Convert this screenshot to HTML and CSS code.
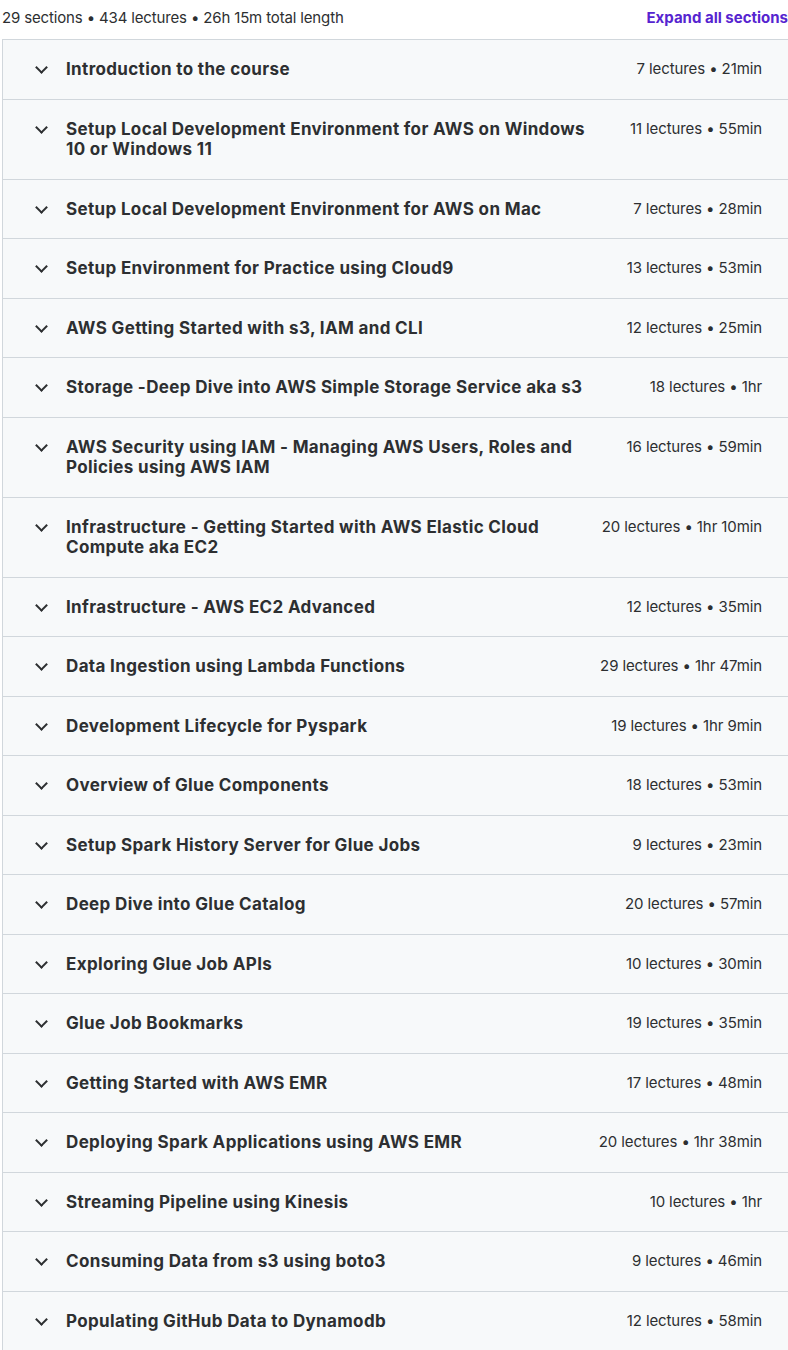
FILE: index.html
```html
<!DOCTYPE html>
<html lang="en">
<head>
    <meta charset="UTF-8">
    <meta name="viewport" content="width=device-width, initial-scale=1.0">
    <title>Course content</title>
    <link rel="stylesheet" href="styles.css">
</head>
<body>
    <div class="curriculum">
        <div class="summary">
            <span class="totals">29 sections • 434 lectures • 26h 15m total length</span>
            <a href="#" class="expand">Expand all sections</a>
        </div>
        <ul class="sections">
            <li class="section"><span class="chev"></span><span class="title">Introduction to the course</span><span class="meta">7 lectures • 21min</span></li>
            <li class="section"><span class="chev"></span><span class="title">Setup Local Development Environment for AWS on Windows 10 or Windows 11</span><span class="meta">11 lectures • 55min</span></li>
            <li class="section"><span class="chev"></span><span class="title">Setup Local Development Environment for AWS on Mac</span><span class="meta">7 lectures • 28min</span></li>
            <li class="section"><span class="chev"></span><span class="title">Setup Environment for Practice using Cloud9</span><span class="meta">13 lectures • 53min</span></li>
            <li class="section"><span class="chev"></span><span class="title">AWS Getting Started with s3, IAM and CLI</span><span class="meta">12 lectures • 25min</span></li>
            <li class="section"><span class="chev"></span><span class="title">Storage -Deep Dive into AWS Simple Storage Service aka s3</span><span class="meta">18 lectures • 1hr</span></li>
            <li class="section"><span class="chev"></span><span class="title">AWS Security using IAM - Managing AWS Users, Roles and Policies using AWS IAM</span><span class="meta">16 lectures • 59min</span></li>
            <li class="section"><span class="chev"></span><span class="title">Infrastructure - Getting Started with AWS Elastic Cloud Compute aka EC2</span><span class="meta">20 lectures • 1hr 10min</span></li>
            <li class="section"><span class="chev"></span><span class="title">Infrastructure - AWS EC2 Advanced</span><span class="meta">12 lectures • 35min</span></li>
            <li class="section"><span class="chev"></span><span class="title">Data Ingestion using Lambda Functions</span><span class="meta">29 lectures • 1hr 47min</span></li>
            <li class="section"><span class="chev"></span><span class="title">Development Lifecycle for Pyspark</span><span class="meta">19 lectures • 1hr 9min</span></li>
            <li class="section"><span class="chev"></span><span class="title">Overview of Glue Components</span><span class="meta">18 lectures • 53min</span></li>
            <li class="section"><span class="chev"></span><span class="title">Setup Spark History Server for Glue Jobs</span><span class="meta">9 lectures • 23min</span></li>
            <li class="section"><span class="chev"></span><span class="title">Deep Dive into Glue Catalog</span><span class="meta">20 lectures • 57min</span></li>
            <li class="section"><span class="chev"></span><span class="title">Exploring Glue Job APIs</span><span class="meta">10 lectures • 30min</span></li>
            <li class="section"><span class="chev"></span><span class="title">Glue Job Bookmarks</span><span class="meta">19 lectures • 35min</span></li>
            <li class="section"><span class="chev"></span><span class="title">Getting Started with AWS EMR</span><span class="meta">17 lectures • 48min</span></li>
            <li class="section"><span class="chev"></span><span class="title">Deploying Spark Applications using AWS EMR</span><span class="meta">20 lectures • 1hr 38min</span></li>
            <li class="section"><span class="chev"></span><span class="title">Streaming Pipeline using Kinesis</span><span class="meta">10 lectures • 1hr</span></li>
            <li class="section"><span class="chev"></span><span class="title">Consuming Data from s3 using boto3</span><span class="meta">9 lectures • 46min</span></li>
            <li class="section"><span class="chev"></span><span class="title">Populating GitHub Data to Dynamodb</span><span class="meta">12 lectures • 58min</span></li>
        </ul>
    </div>
</body>
</html>
```
FILE: styles.css
```css
html, body {
    margin:0; padding:0;
    overflow:hidden;
    background:#fff;
}
body {
    font-family:Inter, "Liberation Sans", Arial, sans-serif;
    color:#2d2f31;
}
.curriculum {
    width:786px;
    margin-left:2px;
}
.summary {
    height:39px;
    display:flex; justify-content:space-between;
    align-items:center;
    font-size:15px;
    padding-bottom:4px;
    box-sizing:border-box;
}
.summary .totals {letter-spacing:-0.15px;}
.summary .expand {
    color:#5624d0; font-weight:700;
    text-decoration:none;
}
.sections {
    list-style:none;
    margin:0; padding:0;
    width:800px;
    border-left:1px solid #d1d7dc;
}
.section {
    display:flex; align-items:flex-start;
    padding:19px 41px 19px 33px;
    background:#f7f9fa;
    border-top:1px solid #d1d7dc;
}
/* small chevron drawn from two borders */
.chev {
    flex:none;
    width:7px; height:7px;
    margin:4px 20px 0 1px;
    border-right:2px solid #2d2f31;
    border-bottom:2px solid #2d2f31;
    transform:rotate(45deg);
}
.title {
    flex:1;
    font-size:17px; font-weight:700;
    letter-spacing:0.35px;
    line-height:20.5px;
}
.meta {
    flex:none;
    margin-left:32px;
    font-size:15px;
    letter-spacing:-0.1px;
    line-height:20.5px;
}
```
